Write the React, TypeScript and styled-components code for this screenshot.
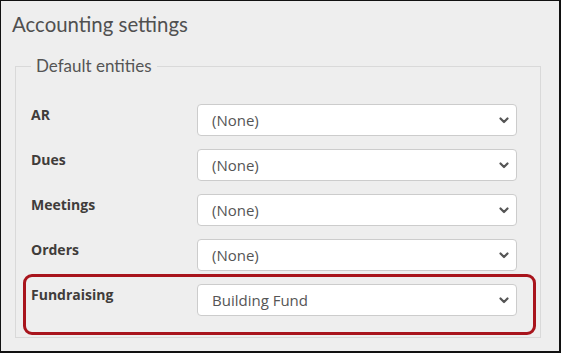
import styled, { createGlobalStyle } from "styled-components";

const GlobalStyle = createGlobalStyle`
  html, body {
    margin: 0;
    padding: 0;
    background: #ffffff;
  }
  * {
    box-sizing: border-box;
  }
`;

const entities = [
  { label: "AR", value: "(None)" },
  { label: "Dues", value: "(None)" },
  { label: "Meetings", value: "(None)" },
  { label: "Orders", value: "(None)" },
  { label: "Fundraising", value: "Building Fund", highlight: true },
];

function Chevron() {
  return (
    <ChevronIcon width="10" height="7" viewBox="0 0 10 7">
      <path d="M1.5 1.5 L5 5 L8.5 1.5" fill="none" stroke="#555" strokeWidth="2.2" strokeLinecap="round" strokeLinejoin="round" />
    </ChevronIcon>
  );
}

function App() {
  return (
    <>
      <GlobalStyle />
      <Panel>
        <Title>Accounting settings</Title>
        <Fieldset>
          <Legend>Default entities</Legend>
          <Rows>
            {entities.map((item) => (
              <Row key={item.label}>
                {item.highlight && <Highlight />}
                <Label>{item.label}</Label>
                <SelectWrap>
                  <Select defaultValue={item.value}>
                    <option>{item.value}</option>
                  </Select>
                  <Chevron />
                </SelectWrap>
              </Row>
            ))}
          </Rows>
        </Fieldset>
      </Panel>
    </>
  );
}

export default App;

const Panel = styled.div`
  width: 561px;
  height: 353px;
  background-color: #eeeeee;
  border-style: solid;
  border-color: #111;
  border-width: 1px 2px 2px 1px;
  padding: 10px 18px 0 14px;
`;

const Title = styled.h1`
  margin: 0 0 0 -3px;
  font-family: "Lato", sans-serif;
  font-size: 20.4px;
  font-weight: 400;
  line-height: 26px;
  color: #505050;
`;

const Fieldset = styled.fieldset`
  margin: 18px 0 0 0;
  padding: 27px 23px 21px 15px;
  border: 1px solid #d9d9d9;
  min-width: 0;
`;

const Legend = styled.legend`
  padding: 0 5px;
  font-family: "Lato", sans-serif;
  font-size: 17px;
  line-height: 22px;
  color: #555555;
`;

const Rows = styled.div`
  display: flex;
  flex-direction: column;
  gap: 13px;
`;

const Row = styled.div`
  position: relative;
  display: grid;
  grid-template-columns: 166px 1fr;
  align-items: start;
`;

const Highlight = styled.div`
  position: absolute;
  left: -8px;
  right: -19px;
  top: -10px;
  bottom: -19px;
  border: 3px solid #a8141c;
  border-radius: 9px;
  pointer-events: none;
`;

const Label = styled.div`
  font-family: "Open Sans", sans-serif;
  font-size: 14px;
  font-weight: 700;
  line-height: 20px;
  color: #403c3a;
  padding-top: 1px;
`;

const SelectWrap = styled.div`
  position: relative;
`;

const Select = styled.select`
  appearance: none;
  width: 100%;
  height: 32px;
  padding: 0 30px 0 14px;
  border: 1px solid #cccccc;
  border-radius: 4px;
  background-color: #ffffff;
  font-family: "Open Sans", sans-serif;
  font-size: 15px;
  color: #555555;
  outline: none;
`;

const ChevronIcon = styled.svg`
  position: absolute;
  right: 8px;
  top: 13px;
  pointer-events: none;
`;
